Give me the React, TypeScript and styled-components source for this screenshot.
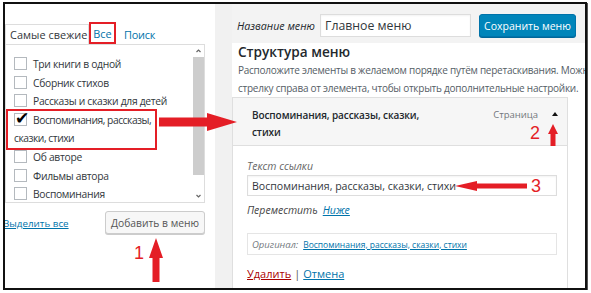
import React from "react";
import styled, { createGlobalStyle } from "styled-components";

const RED = "#e41e26";
const BLUE = "#0073aa";

const Global = createGlobalStyle`
  html, body { margin: 0; padding: 0; background: #fff; }
  body { font-family: "Open Sans", "Noto Sans", sans-serif; color: #32373c; }
  * { box-sizing: border-box; }
`;

const Frame = styled.div`
  position: relative;
  margin: 2px 0 0 3px;
  width: 584px;
  height: 288px;
  border: 2px solid #111;
  box-shadow: 1px 1px 0 #555;
  display: grid;
  grid-template-columns: 210px 17px 1fr;
  overflow: hidden;
  background: #fff;
`;

/* ---------- left panel ---------- */
const LeftCol = styled.div`
  padding-top: 18px;
  display: flex;
  flex-direction: column;
  min-width: 0;
`;

const Tabs = styled.div`
  display: flex;
  align-items: flex-end;
  height: 22px;
  flex: none;
`;

const Tab = styled.span<{ $variant: "active" | "marked" | "plain" }>`
  display: flex;
  align-items: center;
  font-size: 10.9px;
  white-space: nowrap;
  ${(p) =>
    p.$variant === "active"
      ? `height: 20px; width: 84px; padding-left: 4px; border: 1px solid #ddd; border-bottom: none; color: #32373c; letter-spacing: 0.05px;`
      : p.$variant === "marked"
      ? `height: 22px; width: 27px; justify-content: center; border: 2px solid ${RED}; color: ${BLUE};`
      : `height: 20px; padding-left: 8px; color: ${BLUE}; letter-spacing: -0.2px;`}
`;

const ListBox = styled.div`
  width: 200px;
  height: 159px;
  flex: none;
  border: 1px solid #ddd;
  display: flex;
  overflow: hidden;
`;

const List = styled.div`
  flex: 1;
  padding: 10px 0 0 8px;
  overflow: hidden;
`;

const Item = styled.div<{ $marked?: boolean }>`
  font-size: 10.3px;
  letter-spacing: -0.3px;
  line-height: 18.6px;
  color: #32373c;
  white-space: nowrap;
  ${(p) =>
    p.$marked
      ? `width: 151px; margin: -2px 0 -2px -8px; padding-left: 6px; border: 2px solid ${RED}; letter-spacing: -0.48px;`
      : ``}
`;

const Check = styled.span`
  position: relative;
  display: inline-block;
  width: 13px;
  height: 13px;
  border: 1px solid #b4b9be;
  background: #fff;
  vertical-align: -2px;
  margin-right: 6px;
`;

const Tick = styled.span`
  position: absolute;
  left: 0px;
  top: -6px;
  font-family: "DejaVu Sans", sans-serif;
  font-size: 17px;
  font-weight: 700;
  line-height: 20px;
  color: #000;
`;

const Scrollbar = styled.div`
  width: 11px;
  display: flex;
  flex-direction: column;
  align-items: center;
`;

const ScrollArrow = styled.svg`
  width: 11px;
  height: 12px;
  flex: none;
`;

const Thumb = styled.div`
  width: 11px;
  height: 118px;
  background: #cdcdcd;
`;

const Spacer = styled.div`
  flex: 1;
`;

const Footer = styled.div`
  width: 200px;
  margin-top: 8px;
  display: flex;
  align-items: center;
  justify-content: space-between;
`;

const SelectAll = styled.a`
  margin-left: -2px;
  font-size: 9.8px;
  color: ${BLUE};
  text-decoration: underline;
  margin-top: 2px;
`;

const GrayButton = styled.button`
  width: 100px;
  height: 23px;
  padding: 0;
  border: 1px solid #ccc;
  border-radius: 3px;
  background: #f7f7f7;
  box-shadow: 0 1px 0 #ccc;
  color: #555;
  font-family: inherit;
  font-size: 10.3px;
`;

/* ---------- middle band ---------- */
const Band = styled.div`
  background: #f1f1f1;
`;

/* ---------- right panel ---------- */
const RightCol = styled.div`
  min-width: 0;
  overflow: hidden;
  display: flex;
  flex-direction: column;
`;

const Header = styled.div`
  flex: none;
  height: 39px;
  background: #f3f3f3;
  display: flex;
  align-items: flex-start;
  padding: 10px 0 0 5px;
`;

const HeaderLabel = styled.label`
  width: 83px;
  height: 23px;
  display: flex;
  align-items: center;
  font-size: 10.7px;
  font-style: italic;
  color: #23282d;
`;

const TextInput = styled.div<{ $w: number; $h: number; $fs: number }>`
  flex: none;
  width: ${(p) => p.$w}px;
  height: ${(p) => p.$h}px;
  border: 1px solid #ddd;
  background: #fff;
  box-shadow: inset 0 1px 2px rgba(0, 0, 0, 0.05);
  display: flex;
  align-items: center;
  padding-left: 4px;
  font-size: ${(p) => p.$fs}px;
  color: #32373c;
  white-space: nowrap;
`;

const PrimaryButton = styled.button`
  margin-left: 8px;
  width: 97px;
  height: 23px;
  padding: 0;
  border: 1px solid #0073aa;
  border-radius: 3px;
  background: #0085ba;
  box-shadow: 0 1px 0 #006799;
  color: #fff;
  font-family: inherit;
  font-size: 10.5px;
`;

const Body = styled.div`
  padding-left: 6px;
  display: flex;
  flex-direction: column;
`;

const Heading = styled.h3`
  margin: 0;
  font-size: 13.6px;
  font-weight: 600;
  line-height: 18px;
  color: #23282d;
`;

const Desc = styled.p`
  margin: 0;
  font-size: 10px;
  letter-spacing: -0.25px;
  line-height: 18px;
  color: #555d66;
  white-space: nowrap;
`;

const ItemCard = styled.div`
  margin: 0 0 0 -6px;
  width: 336px;
  display: flex;
  flex-direction: column;
`;

const ItemHead = styled.div`
  flex: none;
  height: 49px;
  border: 1px solid #dfdfdf;
  background: #f6f6f6;
  display: flex;
  justify-content: space-between;
  padding: 9px 0 0 19px;
`;

const ItemTitle = styled.div`
  font-size: 10px;
  font-weight: 600;
  letter-spacing: -0.1px;
  line-height: 16.5px;
  color: #23282d;
  white-space: nowrap;
`;

const ItemMeta = styled.div`
  display: flex;
  align-items: flex-start;
  font-size: 9.5px;
  line-height: 16px;
  color: #72777c;
  padding-right: 9px;
`;

const Toggle = styled.span`
  margin: 5px 0 0 14px;
  width: 0;
  height: 0;
  border-left: 3px solid transparent;
  border-right: 3px solid transparent;
  border-bottom: 4px solid #111;
`;

const ItemSettings = styled.div`
  flex: 1;
  border: 1px solid #dfdfdf;
  border-top: none;
  padding: 13px 10px 20px 14px;
  display: flex;
  flex-direction: column;
`;

const FieldLabel = styled.div`
  font-size: 10.5px;
  font-style: italic;
  line-height: 14px;
  color: #666;
  margin-bottom: 2px;
`;

const MoveRow = styled.div`
  margin-top: 7px;
  font-size: 10.5px;
  font-style: italic;
  line-height: 14px;
  color: #444;
  display: flex;
  gap: 5px;
`;

const Link = styled.a<{ $danger?: boolean; $fs?: number }>`
  color: ${(p) => (p.$danger ? "#a00" : BLUE)};
  text-decoration: underline;
  font-size: ${(p) => p.$fs ?? 11}px;
  cursor: pointer;
`;

const Original = styled.div`
  margin-top: 16px;
  width: 310px;
  height: 22px;
  border: 1px solid #e5e5e5;
  display: flex;
  align-items: center;
  gap: 5px;
  padding-left: 4px;
  white-space: nowrap;
`;

const OrigLabel = styled.span`
  font-size: 9.5px;
  font-style: italic;
  color: #72777c;
`;

const Actions = styled.div`
  margin-top: 11px;
  font-size: 11px;
  line-height: 16px;
  color: #555;
  display: flex;
  gap: 3px;
`;

/* ---------- annotations ---------- */
const Mark = styled.svg<{ $x: number; $y: number }>`
  position: absolute;
  left: ${(p) => p.$x}px;
  top: ${(p) => p.$y}px;
  overflow: visible;
`;

const Num = styled.span<{ $x: number; $y: number }>`
  position: absolute;
  left: ${(p) => p.$x}px;
  top: ${(p) => p.$y}px;
  font-family: "Liberation Sans", Arial, sans-serif;
  font-size: 18px;
  line-height: 18px;
  color: ${RED};
`;

type ArrowProps = {
  dir: "up" | "left" | "right";
  x: number;
  y: number;
  len: number;
  head: number;
  headW: number;
  shaft: number;
};

function Arrow({ dir, x, y, len, head, headW, shaft }: ArrowProps) {
  const c = headW / 2;
  const s = shaft / 2;
  let pts: number[][];
  let w: number;
  let h: number;
  if (dir === "up") {
    w = headW;
    h = len;
    pts = [[c, 0], [headW, head], [c + s, head], [c + s, len], [c - s, len], [c - s, head], [0, head]];
  } else if (dir === "right") {
    w = len;
    h = headW;
    pts = [[len, c], [len - head, 0], [len - head, c - s], [0, c - s], [0, c + s], [len - head, c + s], [len - head, headW]];
  } else {
    w = len;
    h = headW;
    pts = [[0, c], [head, 0], [head, c - s], [len, c - s], [len, c + s], [head, c + s], [head, headW]];
  }
  return (
    <Mark $x={x} $y={y} width={w} height={h} viewBox={`0 0 ${w} ${h}`}>
      <polygon points={pts.map((p) => p.join(",")).join(" ")} fill={RED} />
    </Mark>
  );
}

const Chevron = ({ up }: { up?: boolean }) => (
  <ScrollArrow viewBox="0 0 11 12">
    <path
      d={up ? "M3.5 7 L5.5 5 L7.5 7" : "M3.5 5 L5.5 7 L7.5 5"}
      fill="none"
      stroke="#666"
      strokeWidth="1.2"
    />
  </ScrollArrow>
);

const items = ["Три книги в одной", "Сборник стихов", "Рассказы и сказки для детей"];
const itemsAfter = ["Об авторе", "Фильмы автора", "Воспоминания"];

export default function App() {
  return (
    <>
      <Global />
      <Frame>
        <LeftCol>
          <Tabs>
            <Tab $variant="active">Самые свежие</Tab>
            <Tab $variant="marked">Все</Tab>
            <Tab $variant="plain">Поиск</Tab>
          </Tabs>
          <ListBox>
            <List>
              {items.map((t) => (
                <Item key={t}>
                  <Check />
                  {t}
                </Item>
              ))}
              <Item $marked>
                <Check>
                  <Tick>✔</Tick>
                </Check>
                Воспоминания, рассказы,
                <br />
                сказки, стихи
              </Item>
              {itemsAfter.map((t) => (
                <Item key={t}>
                  <Check />
                  {t}
                </Item>
              ))}
            </List>
            <Scrollbar>
              <Chevron up />
              <Thumb />
              <Spacer />
              <Chevron />
            </Scrollbar>
          </ListBox>
          <Footer>
            <SelectAll>Выделить все</SelectAll>
            <GrayButton>Добавить в меню</GrayButton>
          </Footer>
        </LeftCol>
        <Band />
        <RightCol>
          <Header>
            <HeaderLabel>Название меню</HeaderLabel>
            <TextInput $w={151} $h={23} $fs={12.3}>Главное меню</TextInput>
            <PrimaryButton>Сохранить меню</PrimaryButton>
          </Header>
          <Body>
            <Heading>Структура меню</Heading>
            <Desc>
              Расположите элементы в желаемом порядке путём перетаскивания. Можно также щёлкнуть на
              <br />
              стрелку справа от элемента, чтобы открыть дополнительные настройки.
            </Desc>
            <ItemCard>
              <ItemHead>
                <ItemTitle>
                  Воспоминания, рассказы, сказки,
                  <br />
                  стихи
                </ItemTitle>
                <ItemMeta>
                  Страница
                  <Toggle />
                </ItemMeta>
              </ItemHead>
              <ItemSettings>
                <FieldLabel>Текст ссылки</FieldLabel>
                <TextInput $w={310} $h={21} $fs={10.6}>
                  Воспоминания, рассказы, сказки, стихи
                </TextInput>
                <MoveRow>
                  Переместить <Link $fs={10.5}>Ниже</Link>
                </MoveRow>
                <Original>
                  <OrigLabel>Оригинал:</OrigLabel>
                  <Link $fs={8.5}>Воспоминания, рассказы, сказки, стихи</Link>
                </Original>
                <Actions>
                  <Link $danger>Удалить</Link>|<Link>Отмена</Link>
                </Actions>
              </ItemSettings>
            </ItemCard>
          </Body>
        </RightCol>

        <Arrow dir="right" x={154} y={109} len={78} head={30} headW={18} shaft={9} />
        <Num $x={129} $y={240}>1</Num>
        <Arrow dir="up" x={144} y={234} len={44} head={20} headW={14} shaft={7} />
        <Num $x={525} $y={120}>2</Num>
        <Arrow dir="up" x={543} y={120} len={22} head={10} headW={10} shaft={5} />
        <Arrow dir="left" x={450} y={177} len={72} head={22} headW={10} shaft={5} />
        <Num $x={526} $y={173}>3</Num>
      </Frame>
    </>
  );
}
